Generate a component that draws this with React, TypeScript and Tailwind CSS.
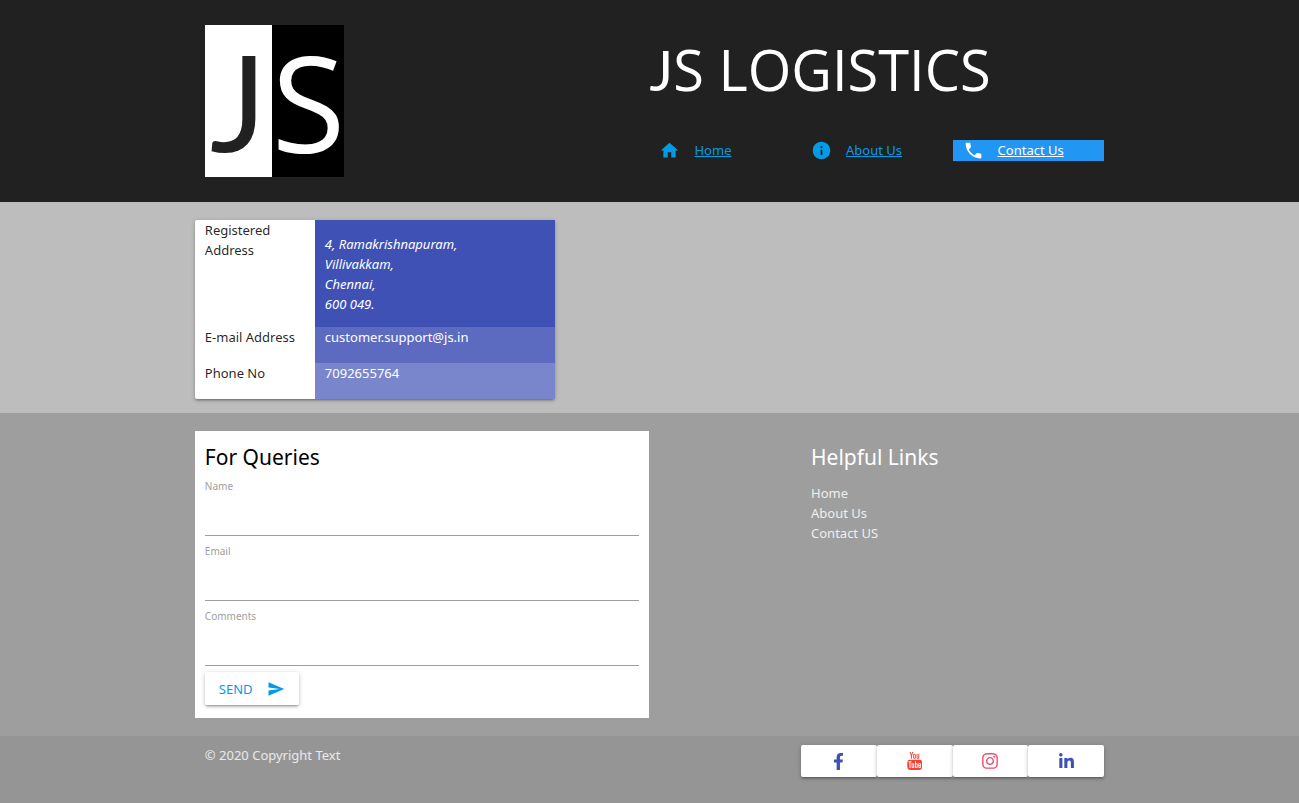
import React from "react";
import { MdHome, MdInfo, MdPhone, MdSend } from "react-icons/md";
import { FaFacebookF, FaInstagram, FaLinkedinIn } from "react-icons/fa";

const raised =
  "shadow-[0_2px_2px_0_rgba(0,0,0,0.14),0_3px_1px_-2px_rgba(0,0,0,0.12),0_1px_5px_0_rgba(0,0,0,0.2)]";

function YoutubeStacked({ className }: { className?: string }) {
  return (
    <svg viewBox="0 0 1536 1792" fill="currentColor" className={className} aria-hidden="true">
      <path d="M971 1244v211q0 67-39 67-23 0-45-22v-301q22-22 45-22 39 0 39 67zm338 1v46h-90v-46q0-68 45-68t45 68zm-966-218h107v-94h-312v94h105v569h100v-569zm288 569h89v-494h-89v378q-30 42-57 42-18 0-21-21-1-3-1-35v-364h-89v391q0 49 8 73 12 37 58 37 48 0 102-61v54zm429-148v-197q0-73-9-99-17-56-71-56-50 0-93 54v-217h-89v663h89v-48q45 55 93 55 54 0 71-55 9-27 9-100zm338-10v-13h-91q0 51-2 61-7 36-40 36-46 0-46-69v-87h179v-103q0-79-27-116-39-51-106-51-68 0-107 51-28 37-28 116v173q0 79 29 116 39 51 108 51 72 0 108-53 18-27 21-54 2-9 2-58zm-608-913v-210q0-69-43-69t-43 69v210q0 70 43 70t43-70zm719 751q0 234-26 350-14 59-58 99t-102 46q-184 21-555 21t-555-21q-58-6-102.5-46t-57.5-99q-26-112-26-350 0-234 26-350 14-59 58-99t103-47q183-20 554-20t555 20q58 7 102.5 47t57.5 99q26 112 26 350zm-998-1276h102l-121 399v271h-100v-271q-14-74-61-212-37-103-65-187h106l71 263zm370 333v175q0 81-28 118-38 51-106 51-67 0-105-51-28-38-28-118v-175q0-80 28-117 38-51 105-51 68 0 106 51 28 37 28 117zm335-162v499h-91v-55q-53 62-103 62-46 0-59-37-8-24-8-75v-394h91v367q0 33 1 35 3 22 21 22 27 0 57-43v-381h91z" />
    </svg>
  );
}

const navItems = [
  { label: "Home", Icon: MdHome, active: false },
  { label: "About Us", Icon: MdInfo, active: false },
  { label: "Contact Us", Icon: MdPhone, active: true },
];

const fields = [
  { id: "name", label: "Name", type: "text" },
  { id: "email", label: "Email", type: "email" },
  { id: "comments", label: "Comments", type: "text" },
];

const socials = [
  { label: "Facebook", Icon: FaFacebookF, style: "h-[17px] text-[#3f51b5]" },
  { label: "YouTube", Icon: YoutubeStacked, style: "h-[18px] text-[#f44336]" },
  { label: "Instagram", Icon: FaInstagram, style: "size-[18px] text-[#ee4c6b]" },
  { label: "LinkedIn", Icon: FaLinkedinIn, style: "size-[17px] text-[#3f51b5]" },
];

export default function App() {
  return (
    <div className="flex min-h-screen flex-col bg-[#959595] font-['Noto_Sans',sans-serif] text-[13px] leading-5 text-black/87">
      <header className="bg-[#212121]">
        <div className="mx-auto grid w-[70%] grid-cols-2 py-[25px]">
          <div className="px-2.5">
            <div className="flex h-[152px] w-fit leading-[152px]">
              <span className="w-[67px] bg-white text-center font-['Lato',sans-serif] text-[134px] text-[#212121]">
                J
              </span>
              <span className="w-[72px] bg-black text-center font-['Open_Sans',sans-serif] text-[134px] text-white">
                S
              </span>
            </div>
          </div>
          <div className="flex flex-col justify-between pt-[13px] pb-4">
            <h1 className="h-[62px] font-['Open_Sans',sans-serif] text-[56px] leading-[62px] whitespace-nowrap text-white">
              <span className="font-['Lato',sans-serif]">J</span>S LOGISTICS
            </h1>
            <nav className="grid grid-cols-3">
              {navItems.map(({ label, Icon, active }) => (
                <a
                  key={label}
                  href="#"
                  className={
                    active
                      ? "flex h-[21px] items-start gap-3.5 bg-[#2196f3] px-2.5 text-white"
                      : "flex h-[21px] items-start gap-3.5 px-2.5 text-[#039be5]"
                  }
                >
                  <Icon className="size-[21px] shrink-0" />
                  <span className="whitespace-nowrap underline">{label}</span>
                </a>
              ))}
            </nav>
          </div>
        </div>
      </header>

      <main className="bg-[#bdbdbd] pt-[18px] pb-3.5">
        <div className="mx-auto w-[70%]">
          <div className={`w-[360px] rounded-xs bg-white ${raised}`}>
            <table className="w-full table-fixed border-collapse">
              <tbody>
                <tr className="align-top">
                  <th scope="row" className="w-1/3 px-2.5 text-left font-normal">
                    Registered Address
                  </th>
                  <td className="bg-[#3f51b5] px-2.5 pt-3.5 pb-[13px] text-white">
                    <address>
                      4, Ramakrishnapuram,
                      <br />
                      Villivakkam,
                      <br />
                      Chennai,
                      <br />
                      600 049.
                    </address>
                  </td>
                </tr>
                <tr className="h-9 align-top">
                  <th scope="row" className="px-2.5 text-left font-normal whitespace-nowrap">
                    E-mail Address
                  </th>
                  <td className="bg-[#5c6bc0] px-2.5 text-white">customer.support@js.in</td>
                </tr>
                <tr className="h-9 align-top">
                  <th scope="row" className="px-2.5 text-left font-normal">
                    Phone No
                  </th>
                  <td className="bg-[#7986cb] px-2.5 text-white">7092655764</td>
                </tr>
              </tbody>
            </table>
          </div>
        </div>
      </main>

      <footer className="flex grow flex-col">
        <div className="bg-[#9e9e9e] py-[18px]">
          <div className="mx-auto grid w-[70%] grid-cols-6">
            <form className="col-span-3 bg-white px-2.5 pt-3.5 pb-[13px]" onSubmit={(e) => e.preventDefault()}>
              <h2 className="mb-[9px] text-[21px] leading-6 text-black">For Queries</h2>
              <div className="flex flex-col gap-[7px]">
                {fields.map(({ id, label, type }) => (
                  <div key={id} className="flex flex-col">
                    <label htmlFor={id} className="text-[10px] leading-4 text-[#9e9e9e]">
                      {label}
                    </label>
                    <input
                      id={id}
                      name={id}
                      type={type}
                      className="h-[42px] w-full border-b border-[#9e9e9e] bg-transparent outline-none focus:border-[#26a69a]"
                    />
                  </div>
                ))}
              </div>
              <button
                type="submit"
                className={`mt-1.5 flex h-[33px] items-center gap-3.5 rounded-xs bg-white px-3.5 text-[#039be5] ${raised}`}
              >
                SEND
                <MdSend className="size-[18px]" />
              </button>
            </form>
            <div className="col-span-2 col-start-5 px-2.5 pt-3.5">
              <h2 className="mb-3.5 text-[21px] leading-6 text-white">Helpful Links</h2>
              <ul className="text-[#eeeeee]">
                <li><a href="#">Home</a></li>
                <li><a href="#">About Us</a></li>
                <li><a href="#">Contact US</a></li>
              </ul>
            </div>
          </div>
        </div>
        <div className="mx-auto grid w-[70%] grid-cols-6 pt-[9px]">
          <p className="col-span-4 px-2.5 text-white/80">© 2020 Copyright Text</p>
          <div className="col-span-2 grid grid-cols-4">
            {socials.map(({ label, Icon, style }) => (
              <a
                key={label}
                href="#"
                aria-label={label}
                className={`flex h-8 items-center justify-center rounded-xs bg-white ${raised}`}
              >
                <Icon className={style} />
              </a>
            ))}
          </div>
        </div>
      </footer>
    </div>
  );
}
